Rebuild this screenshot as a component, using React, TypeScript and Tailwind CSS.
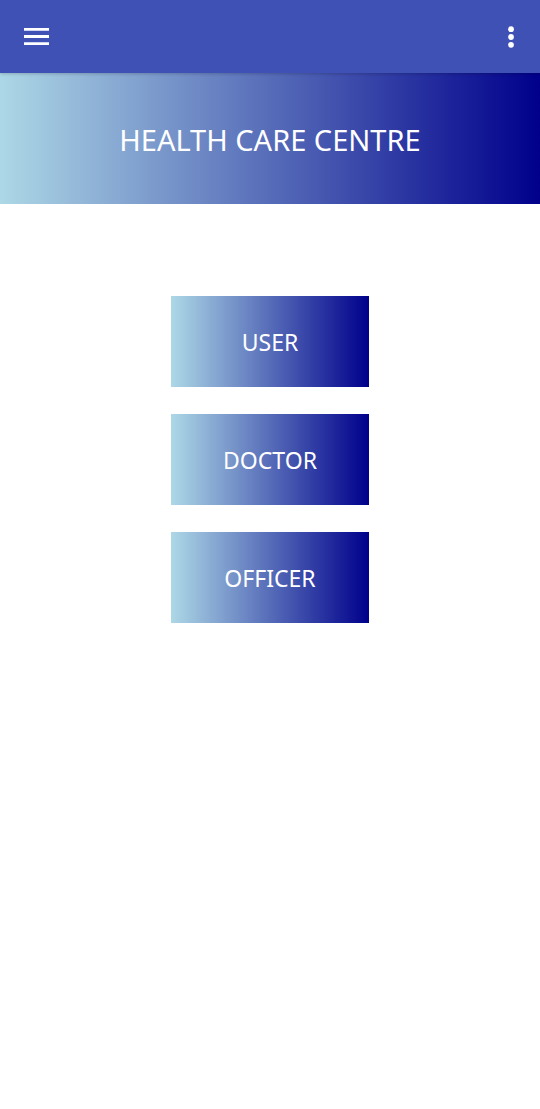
const roles = ["USER", "DOCTOR", "OFFICER"];

export default function App() {
  return (
    <div className="min-h-screen bg-white font-['Noto_Sans',sans-serif] text-white">
      <header className="relative flex h-[73px] items-center justify-between bg-[#3f51b5] pr-[13px] pl-5 shadow-[0_1px_3px_rgba(0,0,0,0.2)]">
        <button type="button" aria-label="Open menu">
          <svg viewBox="0 0 33 33" className="size-[33px]" fill="currentColor" aria-hidden="true">
            <path d="M4 8h25v2.8H4zM4 15.1h25v2.8H4zM4 22.2h25v2.8H4z" />
          </svg>
        </button>
        <button type="button" aria-label="More options">
          <svg viewBox="0 0 32 32" className="size-8" fill="currentColor" aria-hidden="true">
            <circle cx="16" cy="8.2" r="2.9" />
            <circle cx="16" cy="16" r="2.9" />
            <circle cx="16" cy="23.8" r="2.9" />
          </svg>
        </button>
      </header>
      <main>
        <h1 className="flex h-[131px] items-center justify-center bg-[linear-gradient(to_right,#add8e6,#00008b)] pt-0.5 text-[29px] leading-10">
          HEALTH CARE CENTRE
        </h1>
        <nav className="mt-[92px] flex flex-col items-center gap-[27px]">
          {roles.map((role) => (
            <button
              key={role}
              type="button"
              className="h-[91px] w-[198px] bg-[linear-gradient(to_right,#add8e6,#00008b)] text-[23px] leading-8"
            >
              {role}
            </button>
          ))}
        </nav>
      </main>
    </div>
  );
}
